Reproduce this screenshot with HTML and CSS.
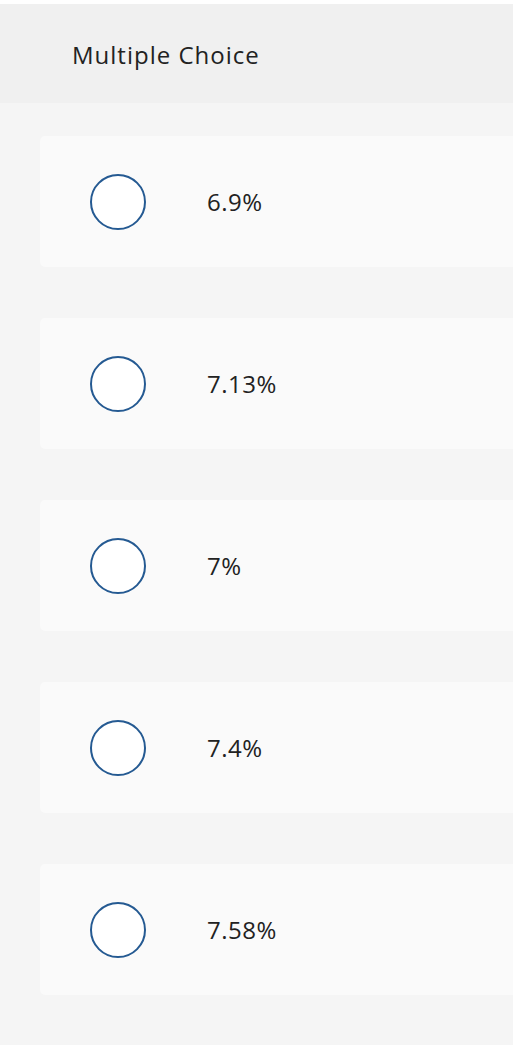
FILE: index.html
```html
<!DOCTYPE html>
<html lang="en">
<head>
    <meta charset="UTF-8">
    <meta name="viewport" content="width=device-width, initial-scale=1.0">
    <title>Multiple Choice</title>
    <link rel="stylesheet" href="styles.css">
</head>
<body>

<div class="page">
    <div class="header">Multiple Choice</div>

    <div class="choices">
        <label class="choice">
            <span class="radio"></span>
            <span class="answer">6.9%</span>
        </label>
        <label class="choice">
            <span class="radio"></span>
            <span class="answer">7.13%</span>
        </label>
        <label class="choice">
            <span class="radio"></span>
            <span class="answer">7%</span>
        </label>
        <label class="choice">
            <span class="radio"></span>
            <span class="answer">7.4%</span>
        </label>
        <label class="choice">
            <span class="radio"></span>
            <span class="answer">7.58%</span>
        </label>
    </div>
</div>

</body>
</html>
```

FILE: styles.css
```css
body {
    margin: 0;
    background: #fff;
    font-family: "Open Sans", Lato, sans-serif;
    color: #222;
    overflow: hidden;
}

.page {
    width: 513px;
    height: 1041px;
    margin-top: 4px;
    display: flex;
    flex-direction: column;
    overflow: hidden;
}

.header {
    height: 99px;
    flex-shrink: 0;
    background: #f0f0f0;
    display: flex;
    align-items: center;
    padding-left: 72px;
    font-size: 24px;
    letter-spacing: 1px;
    padding-top: 2px;
    box-sizing: border-box;
}

.choices {
    flex: 1;
    background: #f5f5f5;
    padding-top: 33px;
    display: flex;
    flex-direction: column;
    gap: 51px;
}

.choice {
    display: flex;
    align-items: center;
    height: 131px;
    margin-left: 40px;
    margin-right: -20px;
    background: #fafafa;
    border-radius: 5px;
    cursor: pointer;
}

.radio {
    width: 52px;
    height: 52px;
    margin-left: 50px;
    border: 2px solid #255a92;
    border-radius: 50%;
    background: #fff;
    flex-shrink: 0;
}

.answer {
    margin-left: 61px;
    font-size: 24px;
    letter-spacing: 0.5px;
}
```
